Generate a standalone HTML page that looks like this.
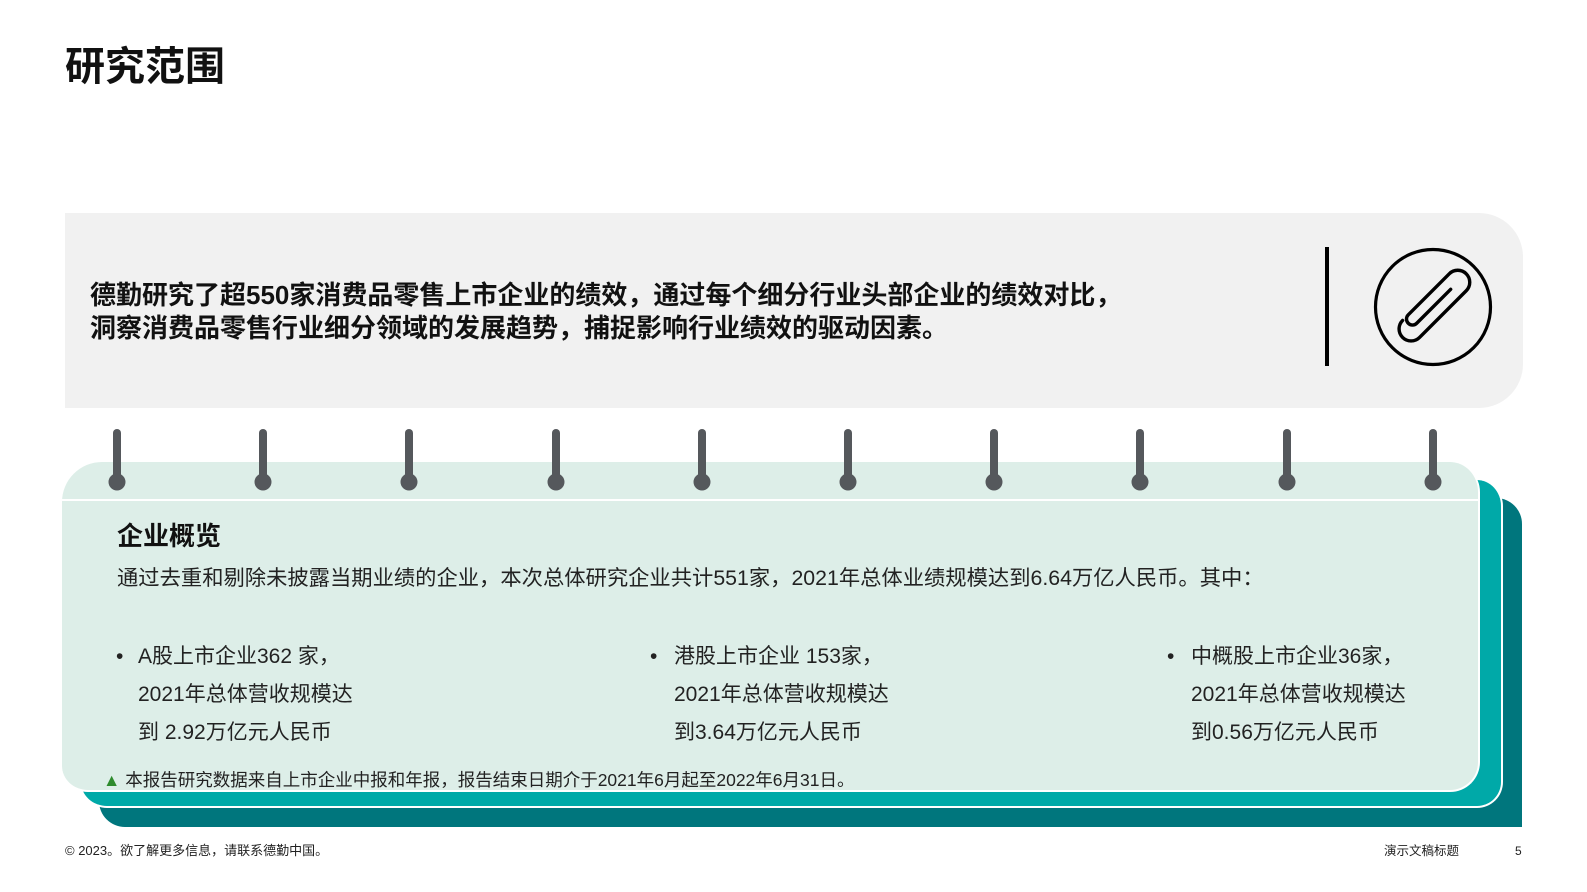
<!DOCTYPE html>
<html><head><meta charset="utf-8"><style>
*{margin:0;padding:0;box-sizing:border-box}
body{width:1587px;height:892px;background:#fff;position:relative;overflow:hidden;font-family:"Liberation Sans","Noto Sans CJK SC",sans-serif;color:#111}
.a{position:absolute;white-space:nowrap}
</style></head><body>
<div class="a" style="left:65px;top:43px;font-size:40px;line-height:48px;font-weight:bold;">研究范围</div>

<div class="a" style="left:65px;top:213px;width:1458px;height:195px;background:#f1f1f1;border-radius:0 44px 44px 0"></div>
<div class="a" style="left:90px;top:279px;font-size:26px;font-weight:bold;line-height:33px;">德勤研究了超550家消费品零售上市企业的绩效，通过每个细分行业头部企业的绩效对比，<br>洞察消费品零售行业细分领域的发展趋势，捕捉影响行业绩效的驱动因素。</div>
<div class="a" style="left:1325px;top:247px;width:4px;height:119px;background:#000"></div>
<svg class="a" style="left:1370px;top:244px" width="126" height="126" viewBox="0 0 126 126">
<circle cx="63" cy="63" r="57.5" fill="none" stroke="#000" stroke-width="3.2"/>
<g fill="none" stroke="#000" stroke-width="3.4" stroke-linecap="round" stroke-linejoin="round" transform="rotate(-45 63 63)">
<path d="M88 63 L40 63 A6 6 0 0 1 40 51 L98 51 A12 12 0 0 1 98 75 L32 75 A12 12 0 0 1 32 51"/>
</g>
</svg>

<div class="a" style="left:99px;top:498px;width:1423px;height:329px;background:#00767d;border-radius:0 26px 0 26px"></div>
<div class="a" style="left:81px;top:480px;width:1422px;height:328px;background:#00a9a8;border:2px solid #fff;border-top:none;border-left:none;border-radius:0 26px 26px 26px"></div>
<div class="a" style="left:62px;top:462px;width:1418px;height:330px;background:#ddeee8;border:2px solid #fff;border-top:none;border-left:none;border-radius:40px 30px 30px 26px"></div>
<div class="a" style="left:62px;top:499px;width:1418px;height:2px;background:#fff"></div>

<svg class="a" style="left:0;top:425px" width="1587" height="70">
<g stroke="#55585c" stroke-width="8" stroke-linecap="round" fill="#55585c">
<line x1="117" y1="8" x2="117" y2="52"/><circle cx="117" cy="57" r="8.5" stroke="none"/>
<line x1="263" y1="8" x2="263" y2="52"/><circle cx="263" cy="57" r="8.5" stroke="none"/>
<line x1="409" y1="8" x2="409" y2="52"/><circle cx="409" cy="57" r="8.5" stroke="none"/>
<line x1="556" y1="8" x2="556" y2="52"/><circle cx="556" cy="57" r="8.5" stroke="none"/>
<line x1="702" y1="8" x2="702" y2="52"/><circle cx="702" cy="57" r="8.5" stroke="none"/>
<line x1="848" y1="8" x2="848" y2="52"/><circle cx="848" cy="57" r="8.5" stroke="none"/>
<line x1="994" y1="8" x2="994" y2="52"/><circle cx="994" cy="57" r="8.5" stroke="none"/>
<line x1="1140" y1="8" x2="1140" y2="52"/><circle cx="1140" cy="57" r="8.5" stroke="none"/>
<line x1="1287" y1="8" x2="1287" y2="52"/><circle cx="1287" cy="57" r="8.5" stroke="none"/>
<line x1="1433" y1="8" x2="1433" y2="52"/><circle cx="1433" cy="57" r="8.5" stroke="none"/>
</g></svg>

<div class="a" style="left:117px;top:520px;font-size:26px;font-weight:bold;line-height:32px;">企业概览</div>
<div class="a" style="left:117px;top:564px;font-size:21.3px;line-height:28px;color:#222">通过去重和剔除未披露当期业绩的企业，本次总体研究企业共计551家，2021年总体业绩规模达到6.64万亿人民币。其中：</div>

<div class="a" style="left:116px;top:638px;font-size:21px;line-height:38px;color:#222">•</div>
<div class="a" style="left:138px;top:638px;font-size:21px;line-height:38px;color:#222">A股上市企业362 家，<br>2021年总体营收规模达<br>到 2.92万亿元人民币</div>
<div class="a" style="left:650px;top:638px;font-size:21px;line-height:38px;color:#222">•</div>
<div class="a" style="left:674px;top:638px;font-size:21px;line-height:38px;color:#222">港股上市企业 153家，<br>2021年总体营收规模达<br>到3.64万亿元人民币</div>
<div class="a" style="left:1167px;top:638px;font-size:21px;line-height:38px;color:#222">•</div>
<div class="a" style="left:1191px;top:638px;font-size:21px;line-height:38px;color:#222">中概股上市企业36家，<br>2021年总体营收规模达<br>到0.56万亿元人民币</div>

<div class="a" style="left:103px;top:769px;font-size:17.5px;line-height:22px;color:#222"><span style="color:#2e8b2e">▲</span> 本报告研究数据来自上市企业中报和年报，报告结束日期介于2021年6月起至2022年6月31日。</div>

<div class="a" style="left:65px;top:843px;font-size:13px;line-height:16px;color:#222">© 2023。欲了解更多信息，请联系德勤中国。</div>
<div class="a" style="left:1384px;top:843px;font-size:12.5px;line-height:16px;color:#222">演示文稿标题</div>
<div class="a" style="left:1515px;top:843px;font-size:12px;line-height:16px;color:#222">5</div>
</body></html>
